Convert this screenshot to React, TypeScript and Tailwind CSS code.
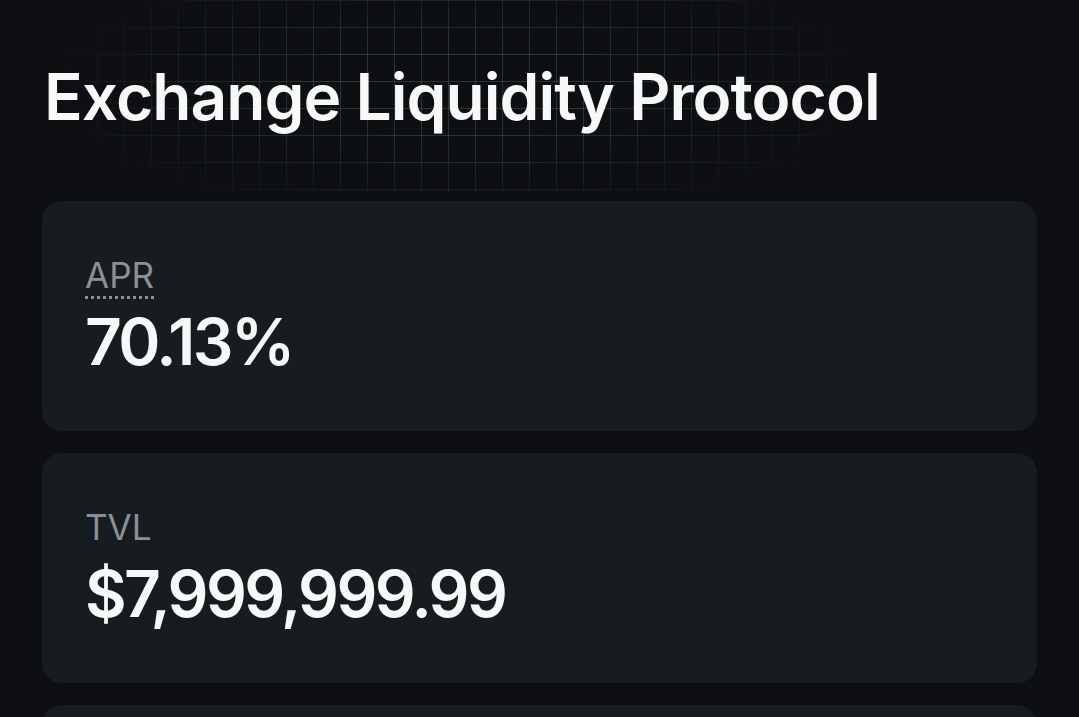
import React from 'react'

type Stat = {
  label: string
  value: string
  hint?: boolean
}

const stats: Stat[] = [
  { label: 'APR', value: '70.13%', hint: true },
  { label: 'TVL', value: '$7,999,999.99' },
]

function StatCard({ stat }: { stat: Stat }) {
  return (
    <div className="rounded-[20px] bg-[#161c1f] px-[43px] pt-[53px] pb-[52px]">
      <div
        className={
          'inline-block text-[35px] leading-[42px] font-normal text-[#8b9094] ' +
          (stat.hint ? 'underline decoration-dotted decoration-[3px] underline-offset-[8px] decoration-[#8b9094]' : '')
        }
      >
        {stat.label}
      </div>
      <div className="mt-[9px] text-[64px] leading-[74px] font-semibold tracking-[-0.04em] text-[#f7f8f8]">
        {stat.value}
      </div>
    </div>
  )
}

export default function App() {
  return (
    <div className="h-screen overflow-hidden bg-[#0d0f13] font-['Inter',sans-serif] text-white">
      <div className="relative px-[42px] pt-[58px] pb-[65px]">
        {/* faded grid behind the heading */}
        <div
          className="pointer-events-none absolute left-[70px] top-0 h-[192px] w-[780px] bg-[linear-gradient(to_right,rgba(110,160,150,0.26)_1px,transparent_1px),linear-gradient(to_bottom,rgba(110,160,150,0.26)_1px,transparent_1px)] bg-[size:27px_27px] [mask-image:radial-gradient(ellipse_55%_75%_at_50%_45%,black_35%,transparent_100%)]"
        />
        <h1 className="relative text-[64px] leading-[78px] font-semibold tracking-[-0.015em] text-[#f7f8f8] pl-[2px]">
          Exchange Liquidity Protocol
        </h1>
      </div>
      <div className="flex flex-col gap-[22px] px-[42px]">
        {stats.map((s) => (
          <StatCard key={s.label} stat={s} />
        ))}
        {/* next card, below the fold */}
        <div className="h-[230px] rounded-[20px] bg-[#161c1f]" />
      </div>
    </div>
  )
}
